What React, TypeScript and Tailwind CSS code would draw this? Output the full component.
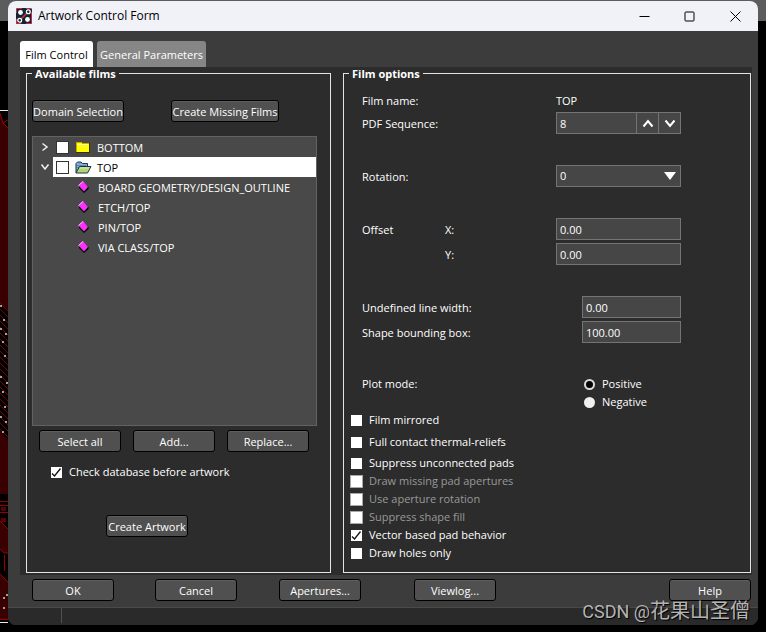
import { useState, type ReactNode } from "react";

const font = "font-['Open_Sans','Noto_Sans','Noto_Sans_CJK_SC',sans-serif]";

function PushButton({ children, className = "w-[82px]" }: { children: ReactNode; className?: string }) {
  return (
    <button
      type="button"
      className={`h-[22px] shrink-0 whitespace-nowrap rounded-[3px] border border-black bg-[#505050] pt-0.5 text-center leading-[18px] shadow-[inset_0_1px_0_#5e5e5e] ${className}`}
    >
      {children}
    </button>
  );
}

function Tick({ checked = false, disabled = false, id, label, outlined = false }: {
  checked?: boolean;
  disabled?: boolean;
  id?: string;
  label?: string;
  outlined?: boolean;
}) {
  const edge = disabled ? "border border-[#a8a8a8]" : outlined ? "border border-[#333]" : "border border-[#2c2c2c]";
  return (
    <span className="relative block size-[13px] shrink-0">
      <input
        type="checkbox"
        id={id}
        aria-label={label}
        defaultChecked={checked}
        disabled={disabled}
        className={`peer block size-[13px] appearance-none bg-white ${edge}`}
      />
      <svg viewBox="0 0 13 13" className="pointer-events-none absolute inset-0 hidden size-[13px] peer-checked:block">
        <path d="M2 7.5 L4.5 10 L10.5 2.5" fill="none" stroke="#111" strokeWidth="1.3" />
      </svg>
    </span>
  );
}

function CheckRow({ id, text, checked, disabled, className = "" }: {
  id: string;
  text: string;
  checked?: boolean;
  disabled?: boolean;
  className?: string;
}) {
  return (
    <div className={`flex h-[18px] items-center gap-1.5 ${className}`}>
      <Tick id={id} checked={checked} disabled={disabled} />
      <label htmlFor={id} className={disabled ? "text-[#999]" : ""}>{text}</label>
    </div>
  );
}

function Group({ title, children }: { title: string; children: ReactNode }) {
  return (
    <fieldset className="min-w-0 border border-[#e4e4e4] pb-2.5">
      <legend className="ml-[5px] px-[3px] font-bold leading-[13px]">{title}</legend>
      {children}
    </fieldset>
  );
}

function ClosedFolder() {
  return (
    <svg viewBox="0 0 16 12" className="h-3 w-4" shapeRendering="crispEdges">
      <path d="M1 2 L2 1 H6 L7 2 H14 V11 H1 Z" fill="#ffff00" stroke="#c8a800" />
      <path d="M1 11.5 H15 M14.5 2 V12" stroke="#3a3000" />
      <path d="M2 3.5 H13" stroke="#fffbb0" />
    </svg>
  );
}

function OpenFolder() {
  return (
    <svg viewBox="0 0 17 13" className="h-[13px] w-[17px]">
      <path d="M1 12 V2.5 L2.5 1 H6 L7.5 2.5 H12.5 V5" fill="#8fb4d0" stroke="#12345c" />
      <path d="M2 11 V3 M4 7 V2.5 M6 5 V2.5 M8 5 V3.5 M10 5 V3.5" stroke="#2b5b85" strokeDasharray="1 1" />
      <path d="M1 12 L4.5 5.5 H16 L12.5 12 Z" fill="#b4d56c" stroke="#12345c" />
      <path d="M5 7 H14" stroke="#d8e8c0" />
    </svg>
  );
}

function Diamond() {
  return (
    <svg viewBox="0 0 11 12" className="h-3 w-[11px]">
      <path d="M1 6 L6 2 L10.500 6.500 L10.500 8 L6 12 L1 7 Z" fill="#000" />
      <path d="M0.500 4.500 L5 0 L10 6 L6 10.500 Z" fill="#fb30fb" />
      <path d="M0.500 4.500 L5 0.500" stroke="#ffc0ff" fill="none" />
    </svg>
  );
}

function FilmTree() {
  const leaves = ["BOARD GEOMETRY/DESIGN_OUTLINE", "ETCH/TOP", "PIN/TOP", "VIA CLASS/TOP"];
  return (
    <ul className="mt-3.5 h-[290px] border border-[#626262] bg-[#494949]">
      <li className="flex h-5 items-center">
        <button type="button" aria-label="Expand BOTTOM" className="flex w-5 justify-center pl-1">
          <svg viewBox="0 0 8 10" className="h-2.5 w-2"><path d="M1.5 1.5 L6 5 L1.5 8.5" fill="none" stroke="#f0f0f0" strokeWidth="1.5" /></svg>
        </button>
        <div className="flex h-5 flex-1 items-center pl-[3px]">
          <Tick label="BOTTOM" outlined />
          <span className="flex w-[28px] justify-center"><ClosedFolder /></span>
          <span className="pt-0.5">BOTTOM</span>
        </div>
      </li>
      <li>
        <div className="flex h-5 items-center">
          <button type="button" aria-label="Collapse TOP" className="flex w-5 justify-center pl-1">
            <svg viewBox="0 0 10 8" className="h-2 w-2.5"><path d="M1.5 1.5 L5 6 L8.5 1.5" fill="none" stroke="#f0f0f0" strokeWidth="1.5" /></svg>
          </button>
          <div className="flex h-5 flex-1 items-center bg-white pl-[3px] text-black">
            <Tick label="TOP" outlined />
            <span className="flex w-[28px] justify-center"><OpenFolder /></span>
            <span className="pt-0.5">TOP</span>
          </div>
        </div>
        <ul>
          {leaves.map((leaf) => (
            <li key={leaf} className="flex h-5 items-center gap-[9px] pl-[45px]">
              <Diamond />
              <span className="pt-0.5">{leaf}</span>
            </li>
          ))}
        </ul>
      </li>
    </ul>
  );
}

const box = "h-[22px] border border-[#747474] bg-[#464646] px-[3px] leading-5 outline-none";

function FilmOptions() {
  const [sequence, setSequence] = useState(8);
  return (
    <>
      <div className="mt-2.5 grid grid-cols-[83px_111px_26px_99px] pl-[18px] *:flex *:h-[22px] *:items-center [&>label]:pt-0.5">
        <span className="col-span-2">Film name:</span>
        <span className="col-span-2">TOP</span>

        <label htmlFor="seq" className="col-span-2">PDF Sequence:</label>
        <div className="col-span-2 border border-[#747474] bg-[#464646]">
          <input
            id="seq"
            value={sequence}
            onChange={(e) => setSequence(Number(e.target.value) || 0)}
            className="h-5 w-0 flex-1 px-[3px] outline-none"
          />
          <button type="button" aria-label="Increase" onClick={() => setSequence(sequence + 1)} className="flex h-5 w-[22px] items-center justify-center border-l border-[#747474]">
            <svg viewBox="0 0 12 9" className="h-[9px] w-3"><path d="M1.5 7.5 L6 2 L10.5 7.5" fill="none" stroke="#fff" strokeWidth="2" /></svg>
          </button>
          <button type="button" aria-label="Decrease" onClick={() => setSequence(sequence - 1)} className="flex h-5 w-[22px] items-center justify-center border-l border-[#747474]">
            <svg viewBox="0 0 12 9" className="h-[9px] w-3"><path d="M1.5 1.5 L6 7 L10.5 1.5" fill="none" stroke="#fff" strokeWidth="2" /></svg>
          </button>
        </div>

        <label htmlFor="rotation" className="col-span-2 mt-[31px]">Rotation:</label>
        <div className="relative col-span-2 mt-[31px]">
          <select id="rotation" defaultValue="0" className={`${box} w-full appearance-none`}>
            <option>0</option>
            <option>90</option>
            <option>180</option>
            <option>270</option>
          </select>
          <svg viewBox="0 0 12 8" className="pointer-events-none absolute right-[5px] top-[7px] h-2 w-3"><path d="M0 0 H12 L6 8 Z" fill="#fff" /></svg>
        </div>

        <span className="mt-[31px] pt-0.5">Offset</span>
        <label htmlFor="offx" className="mt-[31px]">X:</label>
        <input id="offx" defaultValue="0.00" className={`${box} col-span-2 mt-[31px]`} />
        <label htmlFor="offy" className="col-start-2 mt-[3px]">Y:</label>
        <input id="offy" defaultValue="0.00" className={`${box} col-span-2 mt-[3px]`} />

        <label htmlFor="linew" className="col-span-3 mt-[31px]">Undefined line width:</label>
        <input id="linew" defaultValue="0.00" className={`${box} mt-[31px] min-w-0`} />
        <label htmlFor="bbox" className="col-span-3 mt-[3px]">Shape bounding box:</label>
        <input id="bbox" defaultValue="100.00" className={`${box} mt-[3px] min-w-0`} />
      </div>

      <div className="mt-8 flex pl-[18px]" role="radiogroup" aria-label="Plot mode">
        <span className="w-[222px] leading-[18px]">Plot mode:</span>
        <div>
          {["Positive", "Negative"].map((mode) => (
            <div key={mode} className="flex h-[18px] items-center gap-[7px]">
              <input
                type="radio"
                name="plot"
                id={mode}
                defaultChecked={mode === "Positive"}
                className="size-[11px] appearance-none rounded-full bg-[#f0f0f0] checked:border-2 checked:border-[#dcdcdc] checked:bg-black"
              />
              <label htmlFor={mode}>{mode}</label>
            </div>
          ))}
        </div>
      </div>

      <div className="pl-1.5">
        <CheckRow id="mirror" text="Film mirrored" />
        <CheckRow id="thermal" text="Full contact thermal-reliefs" className="mt-1" />
        <CheckRow id="pads" text="Suppress unconnected pads" className="mt-[3px]" />
        <CheckRow id="missing" text="Draw missing pad apertures" disabled />
        <CheckRow id="aprot" text="Use aperture rotation" disabled />
        <CheckRow id="fill" text="Suppress shape fill" disabled />
        <CheckRow id="vector" text="Vector based pad behavior" checked />
        <CheckRow id="holes" text="Draw holes only" />
      </div>
    </>
  );
}

function AppLogo() {
  return (
    <svg viewBox="0 0 16 16" className="size-4">
      <rect width="16" height="16" rx="1.5" fill="#0c2836" />
      <path d="M0.5 5 V1.5 Q0.5 0.5 1.5 0.5 H6 M15.5 4 V14.5 Q15.5 15.5 14.5 15.5 H10 M0.5 11 V15.5 H5 M10 0.5 H15" fill="none" stroke="#d5243c" />
      <path d="M5 11 L11 5" stroke="#e0283e" strokeWidth="1.6" />
      <circle cx="4.5" cy="4.5" r="2.4" fill="#fff" />
      <circle cx="11.5" cy="11.5" r="2.4" fill="#fff" />
      <circle cx="12.3" cy="3.7" r="1.9" fill="none" stroke="#fff" strokeWidth="1.3" />
      <circle cx="3.7" cy="12.3" r="1.9" fill="none" stroke="#fff" strokeWidth="1.3" />
    </svg>
  );
}

function BoardArtwork() {
  const traces = Array.from({ length: 22 }, (_, i) => 303 + i * 6);
  const vias = [[1, 306], [4, 320], [1, 329], [6, 334], [3, 342], [5, 356], [1, 377], [7, 383], [3, 392], [5, 407], [1, 417], [6, 422], [3, 432], [7, 595], [4, 598], [4, 608]];
  return (
    <svg viewBox="0 0 8 632" className="absolute left-0 top-0 h-[632px] w-2" aria-hidden="true">
      <rect y="110" width="8" height="1" fill="#e8e8e8" />
      <path d="M0 113 L3 123 L8 128 V310 L0 303 Z" fill="#380000" />
      <path d="M0 113 L3 123 L8 120 M3 123 L8 128" stroke="#a00000" fill="none" />
      <path d="M0 430 L8 440 V494 H0 Z M0 521 L8 529 V553 H4 L0 549 Z M0 574 L8 582 V620 H0 Z" fill="#380000" />
      {traces.map((y) => <path key={y} d={`M0 ${y} L8 ${y + 8}`} stroke="#7c0000" fill="none" />)}
      <path d="M0 501.5 H8 M0 505.5 H8 M0 512.5 H8 M0 521 L8 529 M0 549 L4 553 H8 M4.5 555 V571 M0 574 L8 582 M0 619.5 H8" stroke="#980000" fill="none" />
      <path d="M1 507 h5 v4 h-5 Z M1 518 h5 v4 h-5 Z" fill="#600000" />
      {vias.map(([x, y]) => <rect key={y} x={x - 1} y={y - 1} width="2" height="2" fill="#a0a0a0" />)}
      <rect y="622" width="8" height="1" fill="#e8e8e8" />
    </svg>
  );
}

export default function App() {
  return (
    <div className={`relative min-h-screen bg-[linear-gradient(#5c5c5c_21px,#000_21px)] px-2 pb-[7px] pt-px text-[11px] leading-[18px] text-white ${font}`}>
      <BoardArtwork />
      <main className="relative overflow-hidden rounded-lg bg-[#3c3c3c]">
        <header className="flex h-[30px] items-center bg-[#f0f2f8] pl-2 text-[12px] text-black">
          <AppLogo />
          <h1 className="ml-1.5 flex-1">Artwork Control Form</h1>
          <button type="button" aria-label="Minimize" className="flex h-full w-[45px] items-center justify-center">
            <svg viewBox="0 0 11 11" className="size-[11px]"><path d="M0.5 5.5 H10.5" stroke="#000" /></svg>
          </button>
          <button type="button" aria-label="Maximize" className="flex h-full w-[45px] items-center justify-center">
            <svg viewBox="0 0 11 11" className="size-[11px]"><rect x="1" y="1" width="9" height="9" rx="0.8" fill="none" stroke="#000" /></svg>
          </button>
          <button type="button" aria-label="Close" className="flex h-full w-[46px] items-center justify-center">
            <svg viewBox="0 0 11 11" className="size-[11px]"><path d="M0.5 0.5 L10.5 10.5 M10.5 0.5 L0.5 10.5" stroke="#000" /></svg>
          </button>
        </header>

        <div role="tablist" className="flex gap-1 pl-3 pt-2.5">
          <button type="button" role="tab" aria-selected="true" className="h-[26px] w-[73px] whitespace-nowrap rounded-t-[3px] bg-white pt-0.5 text-black">Film Control</button>
          <button type="button" role="tab" aria-selected="false" className="h-[26px] w-[109px] whitespace-nowrap rounded-t-[3px] bg-[#868686] pt-0.5">General Parameters</button>
        </div>

        <div className="ml-3 mr-1.5 grid grid-cols-[305fr_408fr] gap-3 bg-[#2c2c2c] pb-0.5 pl-1.5 pr-px">
          <Group title="Available films">
            <div className="pl-[5px] pr-[13px] pt-5">
              <div className="flex gap-[47px]">
                <PushButton className="w-[92px]">Domain Selection</PushButton>
                <PushButton className="w-[108px]">Create Missing Films</PushButton>
              </div>
              <FilmTree />
              <div className="mt-1 flex gap-3 pl-[7px]">
                <PushButton>Select all</PushButton>
                <PushButton>Add...</PushButton>
                <PushButton>Replace...</PushButton>
              </div>
              <CheckRow id="checkdb" text="Check database before artwork" checked className="mt-[11px] pl-[18px]" />
              <div className="mt-[34px] pl-[74px]">
                <PushButton>Create Artwork</PushButton>
              </div>
            </div>
          </Group>
          <Group title="Film options">
            <FilmOptions />
          </Group>
        </div>

        <div className="flex px-6 pb-1.5 pr-[7px] pt-1">
          <PushButton>OK</PushButton>
          <PushButton className="ml-[41px] w-[82px]">Cancel</PushButton>
          <PushButton className="ml-[42px] w-[82px]">Apertures...</PushButton>
          <PushButton className="ml-[53px] w-[82px]">Viewlog...</PushButton>
          <PushButton className="ml-auto w-[82px]">Help</PushButton>
        </div>
        <footer className="h-[18px] border-t border-[#4a4a4a] bg-[#2a2a2a]">
          <div className="h-[15px] w-[54px] border-r border-[#505050]" />
        </footer>
      </main>
      <p className="pointer-events-none absolute bottom-2 right-4 whitespace-nowrap font-[Roboto,'Noto_Sans_CJK_SC',sans-serif] text-[18px] leading-6 text-[#b4b4b4] [text-shadow:1px_1px_1px_#000]">
        CSDN @<span className="text-[20px]">花果山圣僧</span>
      </p>
    </div>
  );
}
